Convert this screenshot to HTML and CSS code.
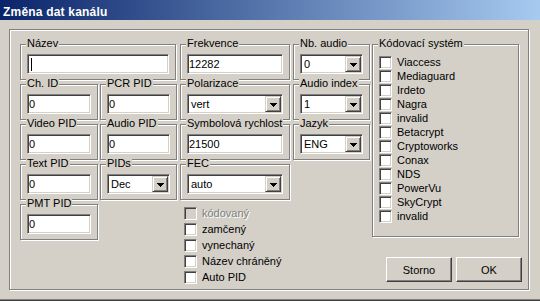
FILE: index.html
```html
<!DOCTYPE html>
<html lang="cs">
<head>
    <meta charset="UTF-8">
    <title>Změna dat kanálu</title>
    <link rel="stylesheet" href="styles.css">
</head>
<body>
    <div class="window">
        <div class="titlebar">Změna dat kanálu</div>

        <div class="panel">
            <div class="fields">
                <!-- row 1 -->
                <div class="group w-ab span2"><span class="cap">Název</span><div class="edit"><span class="caret"></span></div></div>
                <div class="group w-c"><span class="cap">Frekvence</span><div class="edit">12282</div></div>
                <div class="group w-d"><span class="cap">Nb. audio</span><div class="combo"><span>0</span><span class="drop"><svg width="7" height="4" shape-rendering="crispEdges"><path d="M0 0h7v1h-1v1h-1v1h-1v1h-1v-1h-1v-1h-1v-1h-1z"/></svg></span></div></div>

                <!-- row 2 -->
                <div class="group w-a"><span class="cap">Ch. ID</span><div class="edit">0</div></div>
                <div class="group w-b"><span class="cap">PCR PID</span><div class="edit">0</div></div>
                <div class="group w-c"><span class="cap">Polarizace</span><div class="combo"><span>vert</span><span class="drop"><svg width="7" height="4" shape-rendering="crispEdges"><path d="M0 0h7v1h-1v1h-1v1h-1v1h-1v-1h-1v-1h-1v-1h-1z"/></svg></span></div></div>
                <div class="group w-d"><span class="cap">Audio index</span><div class="combo"><span>1</span><span class="drop"><svg width="7" height="4" shape-rendering="crispEdges"><path d="M0 0h7v1h-1v1h-1v1h-1v1h-1v-1h-1v-1h-1v-1h-1z"/></svg></span></div></div>

                <!-- row 3 -->
                <div class="group w-a"><span class="cap">Video PID</span><div class="edit">0</div></div>
                <div class="group w-b"><span class="cap">Audio PID</span><div class="edit">0</div></div>
                <div class="group w-c"><span class="cap">Symbolová rychlost</span><div class="edit">21500</div></div>
                <div class="group w-d"><span class="cap">Jazyk</span><div class="combo"><span>ENG</span><span class="drop"><svg width="7" height="4" shape-rendering="crispEdges"><path d="M0 0h7v1h-1v1h-1v1h-1v1h-1v-1h-1v-1h-1v-1h-1z"/></svg></span></div></div>

                <!-- row 4 -->
                <div class="group w-a"><span class="cap">Text PID</span><div class="edit">0</div></div>
                <div class="group w-b"><span class="cap">PIDs</span><div class="combo"><span>Dec</span><span class="drop"><svg width="7" height="4" shape-rendering="crispEdges"><path d="M0 0h7v1h-1v1h-1v1h-1v1h-1v-1h-1v-1h-1v-1h-1z"/></svg></span></div></div>
                <div class="group w-c"><span class="cap">FEC</span><div class="combo"><span>auto</span><span class="drop"><svg width="7" height="4" shape-rendering="crispEdges"><path d="M0 0h7v1h-1v1h-1v1h-1v1h-1v-1h-1v-1h-1v-1h-1z"/></svg></span></div></div>
                <div></div>

                <!-- row 5 -->
                <div class="group w-a"><span class="cap">PMT PID</span><div class="edit">0</div></div>
                <div></div>
                <div class="flags">
                    <div class="chk disabled"><span class="box"></span>kódovaný</div>
                    <div class="chk"><span class="box"></span>zamčený</div>
                    <div class="chk"><span class="box"></span>vynechaný</div>
                    <div class="chk"><span class="box"></span>Název chráněný</div>
                    <div class="chk"><span class="box"></span>Auto PID</div>
                </div>
            </div>

            <div class="side">
                <div class="group codes">
                    <span class="cap">Kódovací systém</span>
                    <div class="chk small"><span class="box"></span>Viaccess</div>
                    <div class="chk small"><span class="box"></span>Mediaguard</div>
                    <div class="chk small"><span class="box"></span>Irdeto</div>
                    <div class="chk small"><span class="box"></span>Nagra</div>
                    <div class="chk small"><span class="box"></span>invalid</div>
                    <div class="chk small"><span class="box"></span>Betacrypt</div>
                    <div class="chk small"><span class="box"></span>Cryptoworks</div>
                    <div class="chk small"><span class="box"></span>Conax</div>
                    <div class="chk small"><span class="box"></span>NDS</div>
                    <div class="chk small"><span class="box"></span>PowerVu</div>
                    <div class="chk small"><span class="box"></span>SkyCrypt</div>
                    <div class="chk small"><span class="box"></span>invalid</div>
                </div>
                <div class="buttons">
                    <button type="button" class="btn">Storno</button>
                    <button type="button" class="btn">OK</button>
                </div>
            </div>
        </div>
    </div>
</body>
</html>
```

FILE: styles.css
```css
* {
    box-sizing: border-box;
}

body {
    margin: 0;
    background: #d4d0c8;
    font-family: "Liberation Sans", Arial, sans-serif;
    font-size: 11px;
    color: #000;
}

.window {
    width: 540px;
    height: 301px;
    overflow: hidden;
    border-bottom: 1px solid #404040;
    box-shadow: inset 0 -1px #808080;
}

.titlebar {
    height: 20px;
    padding: 5px 0 0 3px;
    line-height: 14px;
    font-size: 12px;
    font-weight: bold;
    letter-spacing: 0.2px;
    color: #fff;
    background: linear-gradient(to right, #0a246a, #a6caf0);
    white-space: nowrap;
}

/* big etched frame round everything */
.panel {
    display: flex;
    width: 520px;
    height: 261px;
    margin: 9px 0 0 9px;
    padding: 14px 0 0 10px;
    border: 1px solid #808080;
    box-shadow: inset 1px 1px #fff, 1px 1px #fff;
}

.fields {
    display: grid;
    grid-template-columns: 80px 80px 113px 79px;
    grid-auto-rows: 40px;
    align-content: start;
    width: 352px;
}

.side {
    width: 150px;
}

/* etched group box */
.group {
    position: relative;
    height: 36px;
    padding: 9px 6px 0;
    border: 1px solid #808080;
    box-shadow: inset 1px 1px #fff, 1px 1px #fff;
}

.cap {
    position: absolute;
    top: -8px;
    left: 5px;
    padding: 0 1px;
    line-height: 13px;
    background: #d4d0c8;
    white-space: nowrap;
}

.w-a { width: 78px; }
.w-b { width: 77px; }
.w-c { width: 110px; }
.w-d { width: 77px; }
.w-ab { width: 156px; }
.span2 { grid-column: span 2; }

/* sunken fields */
.edit,
.combo {
    height: 20px;
    padding: 1px 0 0 1px;
    line-height: 17px;
    background: #fff;
    border: 1px solid;
    border-color: #808080 #fff #fff #808080;
    box-shadow: inset 1px 1px #404040, inset -1px -1px #d4d0c8;
    white-space: nowrap;
    overflow: hidden;
}

.combo {
    display: flex;
    justify-content: space-between;
    padding: 1px 1px 1px 1px;
}

.combo > span:first-child {
    padding-left: 2px;
    line-height: 16px;
}

.drop {
    display: flex;
    align-items: center;
    justify-content: center;
    width: 16px;
    height: 16px;
    background: #d4d0c8;
    border: 1px solid;
    border-color: #d4d0c8 #404040 #404040 #d4d0c8;
    box-shadow: inset 1px 1px #fff, inset -1px -1px #808080;
}

.drop svg {
    display: block;
    margin-top: 1px;
}

.caret {
    display: inline-block;
    width: 1px;
    height: 13px;
    margin: 2px 0 0 2px;
    vertical-align: top;
    background: #000;
}

/* check boxes */
.flags {
    grid-column: 3 / span 2;
    grid-row: 5 / span 2;
    padding: 1px 0 0 4px;
}

.chk {
    display: flex;
    align-items: center;
    height: 16px;
    white-space: nowrap;
}

.chk.small {
    height: 14px;
}

.box {
    flex: none;
    width: 13px;
    height: 13px;
    margin-right: 5px;
    background: #fff;
    border: 1px solid;
    border-color: #808080 #fff #fff #808080;
    box-shadow: inset 1px 1px #404040, inset -1px -1px #d4d0c8;
}

.chk.disabled {
    color: #808080;
    text-shadow: 1px 1px 0 #fff;
}

.chk.disabled .box {
    background: #d4d0c8;
}

.codes {
    width: 147px;
    height: 193px;
    padding: 10px 0 0 6px;
}

.buttons {
    display: flex;
    justify-content: flex-end;
    gap: 4px;
    margin-top: 20px;
}

.btn {
    width: 66px;
    height: 25px;
    padding: 0;
    font: inherit;
    color: #000;
    background: #d4d0c8;
    border: 1px solid;
    border-color: #fff #404040 #404040 #fff;
    box-shadow: inset -1px -1px #808080;
    border-radius: 0;
}
```
